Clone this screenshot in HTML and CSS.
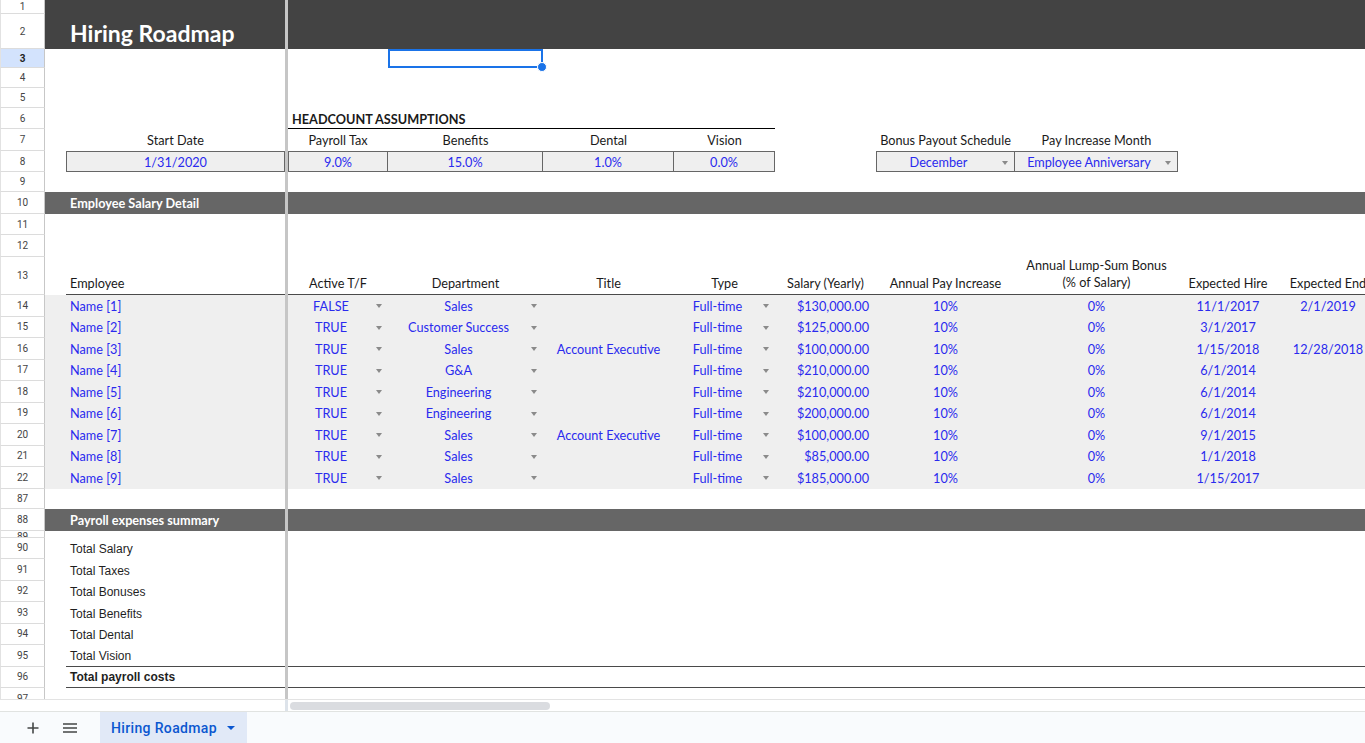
FILE: index.html
```html
<!DOCTYPE html>
<html lang="en">
<head>
<meta charset="utf-8">
<title>Hiring Roadmap</title>
<link rel="stylesheet" href="styles.css">
</head>
<body>
<div class="app">
  <div class="sheet">
    <div class="row h14 r-title"><div class="rh">1</div><div class="dv"></div></div>
    <div class="row h35 r-title"><div class="rh">2</div><div class="dv"></div><div class="c"></div><div class="c l title">Hiring Roadmap</div></div>
    <div class="row h19"><div class="rh on">3</div><div class="dv"></div><div class="c"></div><div class="c"></div><div class="c"></div><div class="c selcell"><span class="sel"></span></div></div>
    <div class="row h20"><div class="rh">4</div><div class="dv"></div></div>
    <div class="row h20"><div class="rh">5</div><div class="dv"></div></div>
    <div class="row h21"><div class="rh">6</div><div class="dv"></div><div class="c"></div><div class="c"></div><div class="c l b ul6">HEADCOUNT ASSUMPTIONS</div><div class="c ul6"></div><div class="c ul6"></div><div class="c ul6"></div></div>
    <div class="row h22"><div class="rh">7</div><div class="dv"></div><div class="c"></div><div class="c">Start Date</div><div class="c">Payroll Tax</div><div class="c">Benefits</div><div class="c">Dental</div><div class="c">Vision</div><div class="c"></div><div class="c">Bonus Payout Schedule</div><div class="c">Pay Increase Month</div></div>
    <div class="row h21"><div class="rh">8</div><div class="dv"></div><div class="c"></div><div class="c box first blue">1/31/2020</div><div class="c box first blue">9.0%</div><div class="c box blue">15.0%</div><div class="c box blue">1.0%</div><div class="c box blue">0.0%</div><div class="c"></div><div class="c box first blue dd"><span class="t">December</span><i class="ar"></i></div><div class="c box blue dd"><span class="t">Employee Anniversary</span><i class="ar"></i></div></div>
    <div class="row h20"><div class="rh">9</div><div class="dv"></div></div>
    <div class="row h22 r-band"><div class="rh">10</div><div class="dv"></div><div class="c"></div><div class="c l band-t">Employee Salary Detail</div></div>
    <div class="row h21"><div class="rh">11</div><div class="dv"></div></div>
    <div class="row h22"><div class="rh">12</div><div class="dv"></div></div>
    <div class="row h38"><div class="rh">13</div><div class="dv"></div><div class="c"></div><div class="c l ul">Employee</div><div class="c ul">Active T/F</div><div class="c ul">Department</div><div class="c ul">Title</div><div class="c ul">Type</div><div class="c ul">Salary (Yearly)</div><div class="c ul">Annual Pay Increase</div><div class="c ul"><span class="two">Annual Lump-Sum Bonus<br>(% of Salary)</span></div><div class="c ul">Expected Hire</div><div class="c ul">Expected End</div></div>

    <div class="row hd r-data"><div class="rh">14</div><div class="dv"></div><div class="c"></div><div class="c l blue">Name [1]</div><div class="c dd blue"><span class="t">FALSE</span><i class="ar"></i></div><div class="c dd blue"><span class="t">Sales</span><i class="ar"></i></div><div class="c blue"></div><div class="c dd blue"><span class="t">Full-time</span><i class="ar"></i></div><div class="c r blue">$130,000.00</div><div class="c blue">10%</div><div class="c blue">0%</div><div class="c blue">11/1/2017</div><div class="c blue">2/1/2019</div></div>
    <div class="row hd r-data"><div class="rh">15</div><div class="dv"></div><div class="c"></div><div class="c l blue">Name [2]</div><div class="c dd blue"><span class="t">TRUE</span><i class="ar"></i></div><div class="c dd blue"><span class="t">Customer Success</span><i class="ar"></i></div><div class="c blue"></div><div class="c dd blue"><span class="t">Full-time</span><i class="ar"></i></div><div class="c r blue">$125,000.00</div><div class="c blue">10%</div><div class="c blue">0%</div><div class="c blue">3/1/2017</div><div class="c blue"></div></div>
    <div class="row hd r-data"><div class="rh">16</div><div class="dv"></div><div class="c"></div><div class="c l blue">Name [3]</div><div class="c dd blue"><span class="t">TRUE</span><i class="ar"></i></div><div class="c dd blue"><span class="t">Sales</span><i class="ar"></i></div><div class="c blue">Account Executive</div><div class="c dd blue"><span class="t">Full-time</span><i class="ar"></i></div><div class="c r blue">$100,000.00</div><div class="c blue">10%</div><div class="c blue">0%</div><div class="c blue">1/15/2018</div><div class="c blue">12/28/2018</div></div>
    <div class="row hd r-data"><div class="rh">17</div><div class="dv"></div><div class="c"></div><div class="c l blue">Name [4]</div><div class="c dd blue"><span class="t">TRUE</span><i class="ar"></i></div><div class="c dd blue"><span class="t">G&amp;A</span><i class="ar"></i></div><div class="c blue"></div><div class="c dd blue"><span class="t">Full-time</span><i class="ar"></i></div><div class="c r blue">$210,000.00</div><div class="c blue">10%</div><div class="c blue">0%</div><div class="c blue">6/1/2014</div><div class="c blue"></div></div>
    <div class="row hd r-data"><div class="rh">18</div><div class="dv"></div><div class="c"></div><div class="c l blue">Name [5]</div><div class="c dd blue"><span class="t">TRUE</span><i class="ar"></i></div><div class="c dd blue"><span class="t">Engineering</span><i class="ar"></i></div><div class="c blue"></div><div class="c dd blue"><span class="t">Full-time</span><i class="ar"></i></div><div class="c r blue">$210,000.00</div><div class="c blue">10%</div><div class="c blue">0%</div><div class="c blue">6/1/2014</div><div class="c blue"></div></div>
    <div class="row hd r-data"><div class="rh">19</div><div class="dv"></div><div class="c"></div><div class="c l blue">Name [6]</div><div class="c dd blue"><span class="t">TRUE</span><i class="ar"></i></div><div class="c dd blue"><span class="t">Engineering</span><i class="ar"></i></div><div class="c blue"></div><div class="c dd blue"><span class="t">Full-time</span><i class="ar"></i></div><div class="c r blue">$200,000.00</div><div class="c blue">10%</div><div class="c blue">0%</div><div class="c blue">6/1/2014</div><div class="c blue"></div></div>
    <div class="row hd r-data"><div class="rh">20</div><div class="dv"></div><div class="c"></div><div class="c l blue">Name [7]</div><div class="c dd blue"><span class="t">TRUE</span><i class="ar"></i></div><div class="c dd blue"><span class="t">Sales</span><i class="ar"></i></div><div class="c blue">Account Executive</div><div class="c dd blue"><span class="t">Full-time</span><i class="ar"></i></div><div class="c r blue">$100,000.00</div><div class="c blue">10%</div><div class="c blue">0%</div><div class="c blue">9/1/2015</div><div class="c blue"></div></div>
    <div class="row hd r-data"><div class="rh">21</div><div class="dv"></div><div class="c"></div><div class="c l blue">Name [8]</div><div class="c dd blue"><span class="t">TRUE</span><i class="ar"></i></div><div class="c dd blue"><span class="t">Sales</span><i class="ar"></i></div><div class="c blue"></div><div class="c dd blue"><span class="t">Full-time</span><i class="ar"></i></div><div class="c r blue">$85,000.00</div><div class="c blue">10%</div><div class="c blue">0%</div><div class="c blue">1/1/2018</div><div class="c blue"></div></div>
    <div class="row hd r-data"><div class="rh">22</div><div class="dv"></div><div class="c"></div><div class="c l blue">Name [9]</div><div class="c dd blue"><span class="t">TRUE</span><i class="ar"></i></div><div class="c dd blue"><span class="t">Sales</span><i class="ar"></i></div><div class="c blue"></div><div class="c dd blue"><span class="t">Full-time</span><i class="ar"></i></div><div class="c r blue">$185,000.00</div><div class="c blue">10%</div><div class="c blue">0%</div><div class="c blue">1/15/2017</div><div class="c blue"></div></div>

    <div class="row h20"><div class="rh">87</div><div class="dv"></div></div>
    <div class="row h22 r-band"><div class="rh">88</div><div class="dv"></div><div class="c"></div><div class="c l band-t">Payroll expenses summary</div></div>
    <div class="row h7"><div class="rh tiny">89</div><div class="dv"></div></div>
    <div class="row hd"><div class="rh">90</div><div class="dv"></div><div class="c"></div><div class="c l sans">Total Salary</div></div>
    <div class="row hd"><div class="rh">91</div><div class="dv"></div><div class="c"></div><div class="c l sans">Total Taxes</div></div>
    <div class="row hd"><div class="rh">92</div><div class="dv"></div><div class="c"></div><div class="c l sans">Total Bonuses</div></div>
    <div class="row hd"><div class="rh">93</div><div class="dv"></div><div class="c"></div><div class="c l sans">Total Benefits</div></div>
    <div class="row hd"><div class="rh">94</div><div class="dv"></div><div class="c"></div><div class="c l sans">Total Dental</div></div>
    <div class="row hd"><div class="rh">95</div><div class="dv"></div><div class="c"></div><div class="c l sans ul">Total Vision</div><div class="c ul"></div><div class="c ul"></div><div class="c ul"></div><div class="c ul"></div><div class="c ul"></div><div class="c ul"></div><div class="c ul"></div><div class="c ul"></div><div class="c ul"></div></div>
    <div class="row hd"><div class="rh">96</div><div class="dv"></div><div class="c"></div><div class="c l sans b ul">Total payroll costs</div><div class="c ul"></div><div class="c ul"></div><div class="c ul"></div><div class="c ul"></div><div class="c ul"></div><div class="c ul"></div><div class="c ul"></div><div class="c ul"></div><div class="c ul"></div></div>
    <div class="row hd"><div class="rh">97</div><div class="dv"></div></div>
  </div>
  <div class="hs"><div class="hs-l"></div><div class="hs-d"></div><div class="thumb"></div></div>
  <div class="tabs">
    <div class="ib plus"><svg width="12" height="12" viewBox="0 0 12 12"><path d="M6 0.5v11M0.5 6h11" stroke="#444746" stroke-width="1.6" fill="none"/></svg></div>
    <div class="ib menu"><svg width="14" height="10" viewBox="0 0 14 10"><path d="M0 1h14M0 5h14M0 9h14" stroke="#444746" stroke-width="1.5" fill="none"/></svg></div>
    <div class="tab"><span class="tab-t">Hiring Roadmap</span><i class="tab-ar"></i></div>
  </div>
</div>
</body>
</html>
```
FILE: styles.css
```css
* { box-sizing: border-box; margin: 0; padding: 0; }
html, body { width: 1365px; height: 743px; overflow: hidden; background: #fff; }
body { font-family: Lato, "Open Sans", sans-serif; font-size: 12.7px; color: #1a1a1a; }

.app { display: flex; flex-direction: column; width: 1365px; height: 743px; }
.sheet { height: 699px; overflow: hidden; flex: none; }

.row {
  display: grid;
  grid-template-columns: 45px 21px 219px 3px 100px 155px 131px 101px 101px 139px 163px 100px 100px;
  width: 1378px;
}
.h7 { height: 7px; }
.h14 { height: 14px; }
.h19 { height: 19px; }
.h20 { height: 20px; }
.h21 { height: 21px; }
.h22 { height: 22px; }
.h35 { height: 35px; }
.h38 { height: 38px; }
.hd { height: 21.5px; }

.r-title { background: #434343; }
.r-band { background: #666666; }
.r-data { background: #efefef; }

.rh {
  grid-column: 1;
  grid-row: 1;
  display: flex;
  align-items: center;
  justify-content: center;
  font-family: Roboto, "Liberation Sans", Arial, sans-serif;
  font-size: 10px;
  color: #444;
  background: #fff;
  border-left: 1px solid #e2e2e2;
  border-right: 1px solid #c7c7c7;
  border-bottom: 1px solid #dcdcdc;
  overflow: hidden;
}
.rh.on { background: #d3e3fd; color: #1f1f1f; font-weight: 700; }
.rh.tiny { align-items: flex-start; padding-top: 1px; line-height: 10px; }

.dv { grid-column: 4; grid-row: 1; background: #c6c6c6; }

.c {
  display: flex;
  align-items: flex-end;
  justify-content: center;
  padding: 0 4px 3px;
  white-space: nowrap;
  min-width: 0;
  line-height: 15px;
}
.l { justify-content: flex-start; }
.r { justify-content: flex-end; padding-right: 7px; }
.b { font-weight: 700; }
.blue { color: #2a2aee; }
.sans { font-family: "Liberation Sans", Arial, sans-serif; font-size: 12px; color: #1f1f1f; padding-bottom: 2px; }

.title {
  color: #fff;
  font-size: 23px;
  font-weight: 700;
  line-height: 26px;
  padding-bottom: 3px;
}
.band-t { color: #fff; font-weight: 700; padding-bottom: 3px; }

.ul6 { border-bottom: 1px solid #000; padding-bottom: 1px; }
.ul { border-bottom: 1px solid #4a4a4a; }

.box {
  background: #efefef;
  border-top: 1px solid #666;
  border-bottom: 1px solid #666;
  border-right: 1px solid #666;
  padding-bottom: 1px;
}
.box.first { border-left: 1px solid #666; }

.dd { padding-right: 0; }
.dd .t { flex: 1; text-align: center; }
.ar {
  flex: none;
  width: 18px;
  height: 15px;
  display: flex;
  align-items: center;
  justify-content: center;
}
.ar::before {
  content: "";
  border-left: 3.5px solid transparent;
  border-right: 3.5px solid transparent;
  border-top: 4px solid #8a8a8a;
}

.two { text-align: center; line-height: 17px; white-space: nowrap; }

.selcell { position: relative; padding: 0; }
.sel {
  position: absolute;
  inset: 0;
  border: 2px solid #1a73e8;
}
.sel::after {
  content: "";
  position: absolute;
  right: -6px;
  bottom: -6px;
  width: 8px;
  height: 8px;
  border-radius: 50%;
  background: #1a73e8;
  border: 1px solid #fff;
}

.hs {
  flex: none;
  height: 12px;
  display: flex;
  align-items: center;
  border-top: 1px solid #e3e3e3;
}
.hs-l { width: 285px; height: 100%; }
.hs-d { width: 3px; height: 100%; background: #dde3ea; }
.thumb { margin-left: 2px; width: 260px; height: 8px; border-radius: 4px; background: #dadce0; }

.tabs {
  flex: 1;
  display: flex;
  align-items: stretch;
  background: #f9fbfd;
  border-top: 1px solid #e1e3e1;
}
.ib { width: 28px; display: flex; align-items: center; justify-content: center; }
.plus { margin-left: 19px; }
.menu { margin-left: 9px; }
.tab {
  margin-left: 16px;
  width: 147px;
  display: flex;
  align-items: center;
  padding-left: 11px;
  background: #e1e9f7;
  color: #0b57d0;
  font-family: Roboto, "Liberation Sans", sans-serif;
  font-size: 14px;
  letter-spacing: 0.35px;
  font-weight: 500;
}
.tab-t { flex: none; }
.tab-ar {
  margin-left: 10px;
  border-left: 4px solid transparent;
  border-right: 4px solid transparent;
  border-top: 4px solid #0b57d0;
}
```
